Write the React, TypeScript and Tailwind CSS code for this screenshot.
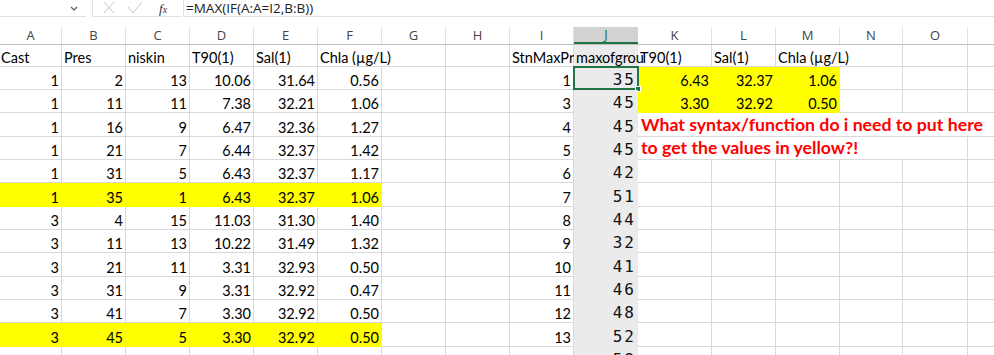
import React from 'react';

const cols = [
  { id: 'A', w: 'w-[62px]' },
  { id: 'B', w: 'w-[64px]' },
  { id: 'C', w: 'w-[64px]' },
  { id: 'D', w: 'w-[64px]' },
  { id: 'E', w: 'w-[64px]' },
  { id: 'F', w: 'w-[64px]' },
  { id: 'G', w: 'w-[64px]' },
  { id: 'H', w: 'w-[64px]' },
  { id: 'I', w: 'w-[64px]' },
  { id: 'J', w: 'w-[64px]' },
  { id: 'K', w: 'w-[74px]' },
  { id: 'L', w: 'w-[64px]' },
  { id: 'M', w: 'w-[64px]' },
  { id: 'N', w: 'w-[63px]' },
  { id: 'O', w: 'w-[65px]' },
  { id: '', w: 'w-[64px]' },
];

const rowHeights = [
  'h-[22px]', 'h-[23px]', 'h-[23px]', 'h-[24px]', 'h-[23px]', 'h-[23px]', 'h-[24px]',
  'h-[23px]', 'h-[23px]', 'h-[24px]', 'h-[23px]', 'h-[23px]', 'h-[24px]', 'h-[23px]',
];

const left = [
  ['Cast', 'Pres', 'niskin', 'T90(1)', 'Sal(1)', 'Chla (µg/L)'],
  ['1', '2', '13', '10.06', '31.64', '0.56'],
  ['1', '11', '11', '7.38', '32.21', '1.06'],
  ['1', '16', '9', '6.47', '32.36', '1.27'],
  ['1', '21', '7', '6.44', '32.37', '1.42'],
  ['1', '31', '5', '6.43', '32.37', '1.17'],
  ['1', '35', '1', '6.43', '32.37', '1.06'],
  ['3', '4', '15', '11.03', '31.30', '1.40'],
  ['3', '11', '13', '10.22', '31.49', '1.32'],
  ['3', '21', '11', '3.31', '32.93', '0.50'],
  ['3', '31', '9', '3.31', '32.92', '0.47'],
  ['3', '41', '7', '3.30', '32.92', '0.50'],
  ['3', '45', '5', '3.30', '32.92', '0.50'],
  ['', '', '', '', '', ''],
];

const colI = ['StnMaxPre', '1', '3', '4', '5', '6', '7', '8', '9', '10', '11', '12', '13', ''];
const colJ = ['maxofgrou', '35', '45', '45', '45', '42', '51', '44', '32', '41', '46', '48', '52', '58'];
const right: Record<number, string[]> = {
  0: ['T90(1)', 'Sal(1)', 'Chla (µg/L)'],
  1: ['6.43', '32.37', '1.06'],
  2: ['3.30', '32.92', '0.50'],
};

const yellowLeft = [6, 12];

interface CellProps {
  w: string;
  h: string;
  children?: React.ReactNode;
  align?: 'left' | 'right';
  fill?: 'yellow' | 'gray';
  noRight?: boolean;
  className?: string;
}

const Cell: React.FC<CellProps> = ({ w, h, children, align = 'right', fill, noRight, className = '' }) => {
  const bg =
    fill === 'yellow'
      ? 'bg-[#ffff00] border-[#ffff00]'
      : fill === 'gray'
      ? 'bg-[#ebebeb] border-[#ebebeb]'
      : 'border-[#d9d9d9]';
  return (
    <div
      className={`${w} ${h} shrink-0 border-b ${noRight ? '' : 'border-r'} ${bg} flex items-end pb-[1px] px-[2px] whitespace-nowrap ${
        align === 'right' ? 'justify-end' : 'justify-start overflow-visible'
      } ${className}`}
    >
      {children}
    </div>
  );
};

const TopBar = () => (
  <div className="h-[27px] flex items-start">
    <div className="w-[86px] h-[17px] border-b border-[#e1e1e1] flex items-center justify-end pr-[8px]">
      <svg width="8" height="5" viewBox="0 0 8 5">
        <path d="M1 1l3 3 3-3" fill="none" stroke="#555" strokeWidth="1.2" />
      </svg>
    </div>
    <div className="w-[6px]" />
    <div className="w-[89px] h-[17px] border-l border-b border-[#e1e1e1] flex items-center">
      <svg width="14" height="14" viewBox="0 0 14 14" className="ml-[9px]">
        <path d="M2 1l10 11M12 1L2 12" stroke="#c6c6c6" strokeWidth="1" fill="none" />
      </svg>
      <svg width="16" height="14" viewBox="0 0 16 14" className="ml-[11px]">
        <path d="M1 6l5 6L15 1" stroke="#c6c6c6" strokeWidth="1" fill="none" />
      </svg>
      <span className="ml-[16px] text-[13px] italic text-[#333] font-['Liberation_Serif',serif] leading-none">
        f<span className="text-[10px]">x</span>
      </span>
    </div>
    <div className="w-[2px]" />
    <div className="flex-1 h-[17px] border-l border-b border-[#e1e1e1] flex items-center pl-[2px] text-[13.5px] text-[#222] font-['Open_Sans',sans-serif] leading-[16px]">
      =MAX(IF(A:A=I2,B:B))
    </div>
  </div>
);

const HeaderRow = () => (
  <div className="flex h-[18px] border-b border-[#bdbdbd] font-['Open_Sans',sans-serif] text-[13px] text-[#444]">
    {cols.map((c, i) =>
      c.id === 'J' ? (
        <div
          key={i}
          className={`${c.w} shrink-0 bg-[#d2d2d2] border-b-2 border-[#217346] flex items-center justify-center text-[#1e6b3f]`}
        >
          {c.id}
        </div>
      ) : (
        <div key={i} className={`${c.w} shrink-0 border-r border-[#e1e1e1] flex items-center justify-center`}>
          {c.id}
        </div>
      )
    )}
  </div>
);

export default function App() {
  return (
    <div className="w-[994px] h-[355px] overflow-hidden bg-white font-['Lato',sans-serif] text-[14.5px] text-black">
      <TopBar />
      <HeaderRow />
      {rowHeights.map((h, r) => {
        const yl = yellowLeft.includes(r);
        const header = r === 0;
        return (
          <div key={r} className="flex leading-none">
            {left[r].map((v, ci) => (
              <Cell
                key={ci}
                w={cols[ci].w}
                h={h}
                align={header ? 'left' : 'right'}
                fill={yl ? 'yellow' : undefined}
                noRight={header && ci === 5}
                className={ci === 0 ? 'pl-[1px]' : ''}
              >
                {v}
              </Cell>
            ))}
            <Cell w={cols[6].w} h={h} />
            <Cell w={cols[7].w} h={h} />
            <Cell w={cols[8].w} h={h} align={header ? 'left' : 'right'} className="overflow-hidden">
              {colI[r]}
            </Cell>
            {header ? (
              <Cell w={cols[9].w} h={h} align="left" fill="gray" className="overflow-hidden">
                {colJ[r]}
              </Cell>
            ) : (
              <div
                className={`${cols[9].w} ${h} shrink-0 bg-[#ebebeb] relative flex items-end justify-end pr-[2px] pb-[2px] font-['DejaVu_Sans_Mono',monospace] text-[16px] tracking-[2px] text-[#111]`}
              >
                {colJ[r]}
                {r === 1 && (
                  <div className="absolute -left-[1px] -top-[1px] w-[66px] h-[24px] border-2 border-[#217346]">
                    <div className="absolute -right-[4px] -bottom-[4px] w-[6px] h-[6px] bg-[#217346] border border-white" />
                  </div>
                )}
              </div>
            )}
            {[10, 11, 12].map((ci, k) => {
              const data = right[r];
              const isY = r === 1 || r === 2;
              if (r === 3 && k === 0) {
                return (
                  <Cell key={ci} w={cols[ci].w} h={h} align="left" noRight className="relative">
                    <span className="absolute left-[3px] bottom-[2px] text-[17.7px] font-bold text-[#ff0000] whitespace-nowrap">
                      What syntax/function do i need to put here
                    </span>
                  </Cell>
                );
              }
              if (r === 4 && k === 0) {
                return (
                  <Cell key={ci} w={cols[ci].w} h={h} align="left" noRight className="relative">
                    <span className="absolute left-[3px] bottom-[2px] text-[17.7px] font-bold text-[#ff0000] whitespace-nowrap">
                      to get the values in yellow?!
                    </span>
                  </Cell>
                );
              }
              return (
                <Cell
                  key={ci}
                  w={cols[ci].w}
                  h={h}
                  align={header ? 'left' : 'right'}
                  fill={isY ? 'yellow' : undefined}
                  noRight={(header && k === 2) || r === 3 || (r === 4 && k < 3)}
                >
                  {data ? data[k] : ''}
                </Cell>
              );
            })}
            {[13, 14, 15].map((ci) => (
              <Cell key={ci} w={cols[ci].w} h={h} noRight={r === 3 || (r === 4 && ci === 13)} />
            ))}
          </div>
        );
      })}
    </div>
  );
}
